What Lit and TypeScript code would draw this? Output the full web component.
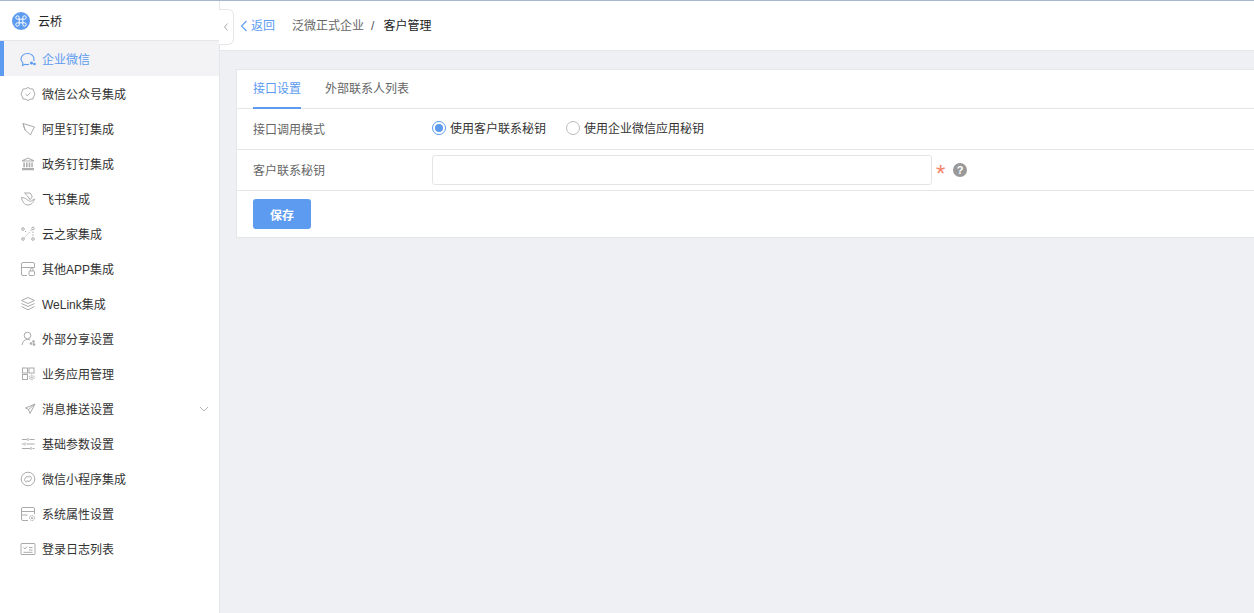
import { LitElement, html, css, svg } from "lit";
import { customElement } from "lit/decorators.js";

const g = (c: unknown) => svg`<svg class="ic" width="18" height="18" viewBox="0 0 18 18" fill="none" stroke="#aaa" stroke-width="1">${c}</svg>`;

const icons: Record<string, unknown> = {
  chat: svg`<svg class="ic" width="18" height="18" viewBox="0 0 18 18" fill="none" stroke="#5c9bef" stroke-width="1.1"><path d="M10 14.300c-1.300.4-2.700.4-3.900 0L3.500 15.500l.4-2.600C2.700 11.900 2 10.600 2 9.100 2 5.800 4.900 3.500 8.500 3.500s6.500 2.300 6.500 5.600c0 .7-.1 1.300-.4 1.900"/><circle cx="12.500" cy="13" r="1" fill="#5c9bef"/><circle cx="15.500" cy="14" r=".8" fill="#5c9bef"/></svg>`,
  badge: g(svg`<path d="M9 2.500l2.300 1.300 2.600.2.900 2.400L16 9l-1.200 2.600-.9 2.400-2.600.2L9 15.500l-2.300-1.300-2.600-.2-.9-2.400L2 9l1.200-2.600.9-2.400 2.600-.2z"/><path d="M6.500 9.200l1.800 1.600 3.200-3.200"/>`),
  ding: g(svg`<path d="M4 3.500l11.500 3.500-2.500 4.500L11.500 15 8.500 12 6 10z"/><path d="M6 10L4 3.500"/>`),
  bank: svg`<svg class="ic" width="18" height="18" viewBox="0 0 18 18" fill="#aeaeae" stroke="none"><path d="M9 2.500l6 2.800v1.200H3V5.300zM9 3.600L5.200 5.400h7.600z" fill-rule="evenodd"/><path d="M4.300 7.500h1.600v4.800H4.300zM7 7.500h1.600v4.800H7zM9.700 7.500h1.600v4.800H9.700zM12.300 7.500h1.500v4.800h-1.500zM3 13h12v2.300H3z"/></svg>`,
  fly: g(svg`<path d="M2.500 7.500c2.200 0 4.500 1 6.800 3 1 .9 2 1 3 .5L15.500 9c-1 3.500-3.300 6-6.500 6-3.300 0-5.800-3-6.500-7.500z"/><path d="M5.500 3h5.700c1 1.300 1.700 2.500 2 4L11 9.700C9.500 7 7.800 4.800 5.500 3z"/>`),
  nodes: g(svg`<circle cx="4" cy="4" r="1.300"/><circle cx="14" cy="3.500" r="1.300"/><circle cx="4" cy="14" r="1.300"/><circle cx="14" cy="14" r="1.300"/><path d="M6 6l2 2M12.500 5L5.500 12.500M14 6.500V11.500" stroke-dasharray="1.500 1.500"/>`),
  app: g(svg`<path d="M8 15.500H4a1.500 1.500 0 0 1-1.500-1.500V4A1.500 1.500 0 0 1 4 2.500h10A1.500 1.500 0 0 1 15.500 4v3.500h-13"/><rect x="10" y="11" width="5.500" height="4.500" rx=".8"/><path d="M11.300 11V9.800a1.400 1.400 0 0 1 2.800 0V11"/>`),
  layers: g(svg`<path d="M9 2.500l6.500 3L9 8.500l-6.500-3z"/><path d="M2.500 8.500L9 11.500l6.500-3"/><path d="M2.500 11.500L9 14.800l6.500-3.300"/>`),
  user: g(svg`<circle cx="8.500" cy="5.500" r="3.300"/><path d="M3 15c.3-3.400 2.700-5.500 5.500-5.500 1 0 1.800.2 2.500.5"/><circle cx="14.500" cy="11.500" r=".9" fill="#aaa"/><circle cx="12" cy="13.500" r=".9" fill="#aaa"/><circle cx="15" cy="14.500" r=".9" fill="#aaa"/>`),
  grid: g(svg`<rect x="3.500" y="3" width="5" height="5"/><rect x="10" y="3" width="5" height="5"/><rect x="3.500" y="9.500" width="5" height="5"/><circle cx="12.800" cy="12.500" r="2.400" stroke-dasharray="1.500 .8"/><circle cx="12.800" cy="12.500" r=".7"/>`),
  send: g(svg`<path d="M16 4L6.500 8l3 1.500L11 13.500z"/><path d="M9.500 9.500L16 4"/>`),
  sliders: g(svg`<path d="M3 4.500h5M10.500 4.500h5M3 9h2M7.500 9h8M3 13.500h8M13.500 13.500h2"/><path d="M9 3v3M6 7.500v3M12 12v3"/>`),
  compass: g(svg`<circle cx="9" cy="9" r="6.800"/><path d="M9.800 6.200a2.200 2.200 0 0 1 2.700 2.200l-1.800 3-3-.5M8.200 11.800a2.200 2.200 0 0 1-2.700-2.200l1.800-3 3 .5"/>`),
  panel: g(svg`<path d="M9 15.500H4A1.500 1.500 0 0 1 2.500 14V4A1.500 1.500 0 0 1 4 2.500h10A1.500 1.500 0 0 1 15.500 4v5"/><path d="M2.500 6.500h13M2.500 10h6"/><circle cx="13" cy="13" r="2.500" stroke-dasharray="1.500 .7"/><circle cx="13" cy="13" r=".7"/>`),
  log: g(svg`<rect x="2" y="3.500" width="14" height="11" rx=".5"/><path d="M4.500 7.500l1.500 1.500L8 6.500M10 7.500h3.500M10 10h3.500M4.500 12.300h9"/>`),
};

const menu = [
  ["chat", "企业微信"], ["badge", "微信公众号集成"], ["ding", "阿里钉钉集成"], ["bank", "政务钉钉集成"],
  ["fly", "飞书集成"], ["nodes", "云之家集成"], ["app", "其他APP集成"], ["layers", "WeLink集成"],
  ["user", "外部分享设置"], ["grid", "业务应用管理"], ["send", "消息推送设置"], ["sliders", "基础参数设置"],
  ["compass", "微信小程序集成"], ["panel", "系统属性设置"], ["log", "登录日志列表"],
];

@customElement("app-root")
export class AppRoot extends LitElement {
  static styles = css`
    :host { display: block; height: 613px; overflow: hidden; font: 12px "Liberation Sans", "Noto Sans CJK SC", sans-serif; color: #333; }
    * { box-sizing: border-box; }
    .page { display: flex; height: 613px; border-top: 1px solid #a9b6d0; background: #eef0f4; }
    aside { width: 220px; flex: none; background: #fff; border-right: 1px solid #e4e6ea; }
    .brand { height: 40px; display: flex; align-items: center; gap: 8px; padding-left: 12px; border-bottom: 1px solid #e6e6e6; color: #222; }
    .logo { width: 18px; height: 18px; border-radius: 50%; background: #5c9bef; display: flex; align-items: center; justify-content: center; }
    .item { height: 35px; display: flex; align-items: center; padding-left: 19px; gap: 5px; color: #333; position: relative; }
    .item.on { background: #f3f3f5; color: #5c9bef; border-left: 4px solid #5c9bef; padding-left: 15px; }
    .ic { flex: none; }
    .chev { position: absolute; left: 199px; top: 13px; }
    main { flex: 1; min-width: 0; display: flex; flex-direction: column; }
    .top { height: 50px; background: #fff; border-bottom: 1px solid #e4e6ea; display: flex; align-items: flex-start; position: relative; padding: 16px 0 0 20px; }
    .fold { position: absolute; left: -1px; top: 8px; width: 15px; height: 36px; background: #fff; border: 1px solid #e6e6e6; border-left: none; border-radius: 0 6px 6px 0; display: flex; align-items: center; justify-content: center; }
    .back { color: #5c9bef; display: flex; align-items: center; gap: 3px; line-height: 18px; }
    .crumb { margin-left: 17px; line-height: 18px; color: #666; display: flex; }
    .sep { margin: 0 9px 0 7px; color: #555; }
    .cur { color: #222; }
    .card { margin: 18px 0 0 16px; background: #fff; border: 1px solid #e4e6ea; border-right: none; height: 169px; }
    .tabs { height: 39px; display: flex; padding-left: 16px; gap: 24px; border-bottom: 1px solid #e4e6ea; }
    .tab { height: 39px; line-height: 39px; color: #666; }
    .tab.on { color: #5c9bef; border-bottom: 2px solid #5c9bef; }
    .row { display: flex; align-items: center; padding-left: 16px; border-bottom: 1px solid #e4e6ea; }
    .r1, .r2 { height: 41px; }
    .r1 { padding-bottom: 4px; }
    .r1 .lab { margin-top: 2px; }
    .r2 .lab { margin-bottom: 2px; }
    .lab { width: 179px; color: #666; flex: none; }
    .radio { display: flex; align-items: center; gap: 4px; margin-right: 20px; color: #333; }
    .dot { width: 14px; height: 14px; border-radius: 50%; border: 1px solid #bbb; background: #fff; position: relative; top: 1px; }
    .dot.on { border-color: #5c9bef; }
    .dot.on::after { content: ""; position: absolute; inset: 2px; border-radius: 50%; background: #5c9bef; }
    .input { width: 500px; height: 30px; border: 1px solid #e4e4e4; border-radius: 3px; background: #fff; }
    .star { color: #f5836c; font-size: 24px; line-height: 18px; margin-left: 4px; width: 17px; position: relative; top: 4px; }
    .help { width: 14px; height: 14px; border-radius: 50%; background: #999; color: #fff; font: bold 11px/14px "Liberation Sans", sans-serif; text-align: center; }
    .foot { padding: 8px 0 0 16px; }
    button { width: 58px; height: 30px; border: none; border-radius: 3px; background: #5c9bef; color: #fff; font: bold 12px "Liberation Sans", "Noto Sans CJK SC", sans-serif; padding: 0; }
  `;

  render() {
    return html`<div class="page">
      <aside>
        <div class="brand">
          <span class="logo"><svg width="14" height="14" viewBox="0 0 14 14" fill="none" stroke="#fff" stroke-width="1"><path d="M5.200 5.200h3.600v3.600H5.200zM5.200 5.200H3.500a1.700 1.700 0 1 1 1.700-1.700zM8.800 5.200V3.500a1.700 1.700 0 1 1 1.700 1.700zM8.800 8.800h1.700a1.700 1.700 0 1 1-1.700 1.700zM5.200 8.800v1.700a1.700 1.700 0 1 1-1.700-1.700z"/></svg></span>
          <span>云桥</span>
        </div>
        ${menu.map(([ic, label], i) => html`<div class="item ${i === 0 ? "on" : ""}">
          ${icons[ic]}<span>${label}</span>
          ${ic === "send" ? html`<svg class="chev" width="10" height="10" viewBox="0 0 10 10" fill="none" stroke="#b5b5b5"><path d="M1 3l4 4 4-4"/></svg>` : ""}
        </div>`)}
      </aside>
      <main>
        <div class="top">
          <div class="fold"><svg width="6" height="10" viewBox="0 0 6 10" fill="none" stroke="#aaa"><path d="M4.500 1.500L1.500 5l3 3.500"/></svg></div>
          <div class="back"><svg width="8" height="12" viewBox="0 0 8 12" fill="none" stroke="#5c9bef" stroke-width="1.100"><path d="M6.500 1L1.500 6l5 5"/></svg>返回</div>
          <div class="crumb"><span>泛微正式企业</span><span class="sep">/</span><span class="cur">客户管理</span></div>
        </div>
        <div class="card">
          <div class="tabs"><div class="tab on">接口设置</div><div class="tab">外部联系人列表</div></div>
          <div class="row r1">
            <div class="lab">接口调用模式</div>
            <label class="radio"><span class="dot on"></span>使用客户联系秘钥</label>
            <label class="radio"><span class="dot"></span>使用企业微信应用秘钥</label>
          </div>
          <div class="row r2">
            <div class="lab">客户联系秘钥</div>
            <div class="input"></div>
            <span class="star">*</span>
            <span class="help">?</span>
          </div>
          <div class="foot"><button>保存</button></div>
        </div>
      </main>
    </div>`;
  }
}
